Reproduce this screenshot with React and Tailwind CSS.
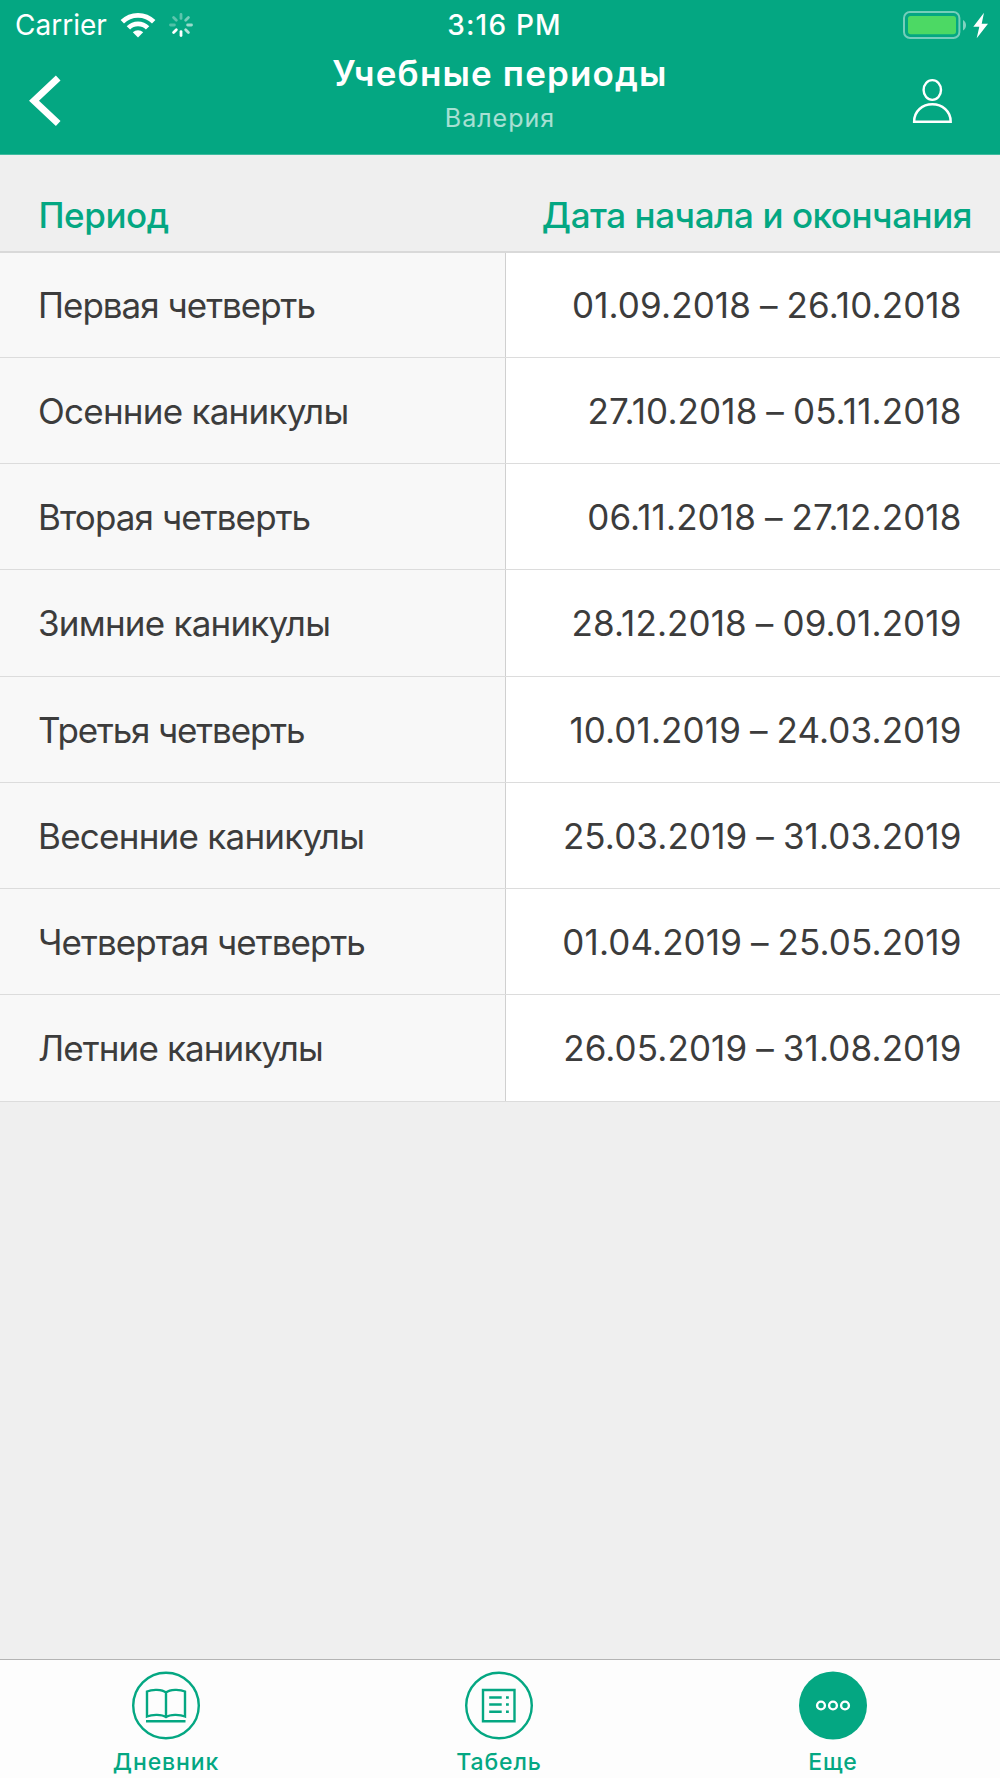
const periods = [
    { name: "Первая четверть", dates: "01.09.2018 – 26.10.2018", spacing: "tracking-[-1px]" },
    { name: "Осенние каникулы", dates: "27.10.2018 – 05.11.2018", spacing: "tracking-[-0.75px]" },
    { name: "Вторая четверть", dates: "06.11.2018 – 27.12.2018", spacing: "tracking-[-0.9px]" },
    { name: "Зимние каникулы", dates: "28.12.2018 – 09.01.2019", spacing: "tracking-[-0.78px]" },
    { name: "Третья четверть", dates: "10.01.2019 – 24.03.2019", spacing: "tracking-[-1.15px]" },
    { name: "Весенние каникулы", dates: "25.03.2019 – 31.03.2019", spacing: "tracking-[-0.75px]" },
    { name: "Четвертая четверть", dates: "01.04.2019 – 25.05.2019", spacing: "tracking-[-0.95px]" },
    { name: "Летние каникулы", dates: "26.05.2019 – 31.08.2019", spacing: "tracking-[-0.88px]" },
];

// opacity of every spoke, clockwise from the top
const spokes = [0.35, 0.45, 0.6, 0.7, 1, 1, 0.3, 0.35];

function Wifi() {
    return (
        <svg width="36" height="26" viewBox="0 0 36 26" fill="none" stroke="white" strokeWidth="4.8">
            <path d="M2.3 9.8a22.2 22.2 0 0 1 31.4 0" />
            <path d="M8.4 15.9a13.6 13.6 0 0 1 19.2 0" />
            <path d="M18 25.5l-5.2-5.2a7.4 7.4 0 0 1 10.4 0z" fill="white" stroke="none" />
        </svg>
    );
}

function Spinner() {
    return (
        <svg width="24" height="24" viewBox="-12 -12 24 24" stroke="white" strokeWidth="2.8" strokeLinecap="round">
            {spokes.map((opacity, i) => (
                <line key={i} x1="0" y1="-6.6" x2="0" y2="-10.5" opacity={opacity} transform={`rotate(${i * 45})`} />
            ))}
        </svg>
    );
}

function Battery() {
    return (
        <svg width="86" height="30" viewBox="0 0 86 30">
            <rect x="1" y="2" width="55.4" height="26" rx="6" fill="none" stroke="white" strokeWidth="2" opacity="0.45" />
            <rect x="5" y="6" width="48" height="18.2" rx="2.6" fill="#4cd964" />
            <path d="M60 10c4 2 4 8.5 0 10.5z" fill="white" opacity="0.5" />
            <path d="M81 2.7L70.3 16.7h6L73.7 28.3 85 13.7h-6.3z" fill="white" />
        </svg>
    );
}

function Header() {
    return (
        <header className="h-[155px] bg-[#04a782] border-b border-[#3fbb9f] text-white">
            <div className="h-[50px] grid grid-cols-3 items-center">
                <div className="flex items-center pl-[15px]">
                    <span className="w-[105px] text-[28px] leading-none">Carrier</span>
                    <Wifi />
                    <span className="ml-[13px]"><Spinner /></span>
                </div>
                <div className="pl-[9px] text-center text-[28px] leading-none font-medium tracking-[1.2px]">3:16 PM</div>
                <div className="flex justify-end pr-[11px]"><Battery /></div>
            </div>
            <div className="h-[104px] flex justify-between">
                <button className="w-[120px] pl-[28px] pt-[24px] flex items-start">
                    <svg width="34" height="54" viewBox="0 0 34 54" fill="none" stroke="white" strokeWidth="6.8">
                        <path d="M30.2 4L6 26.7 30.2 49.4" />
                    </svg>
                </button>
                <div className="text-center">
                    <h1 className="pt-[3px] text-[35px] leading-[40px] font-semibold tracking-[1.15px]">Учебные периоды</h1>
                    <p className="pt-[10px] text-[25px] leading-[30px] tracking-[1px] text-white/65">Валерия</p>
                </div>
                <button className="w-[120px] pl-[32px] pt-[27px] flex items-start">
                    <svg width="42" height="48" viewBox="0 0 42 48" fill="none" stroke="white" strokeWidth="2.4">
                        <ellipse cx="20.3" cy="13" rx="8.7" ry="9.9" />
                        <path d="M2.1 44.7C2.1 34 10.5 27.3 20.3 27.3S38.7 34 38.7 44.7z" />
                    </svg>
                </button>
            </div>
        </header>
    );
}

function Tab({ label, children }) {
    return (
        <a className="flex flex-col items-center pt-[11px]">
            <svg width="68" height="69" viewBox="0 -0.5 68 69" fill="none" stroke="#04a782" strokeWidth="2.4">
                {children}
            </svg>
            <span className="mt-[10px] text-[23px] leading-[25px] font-medium tracking-[0.9px]">{label}</span>
        </a>
    );
}

export default function App() {
    return (
        <div className="w-full h-screen flex flex-col bg-[#efefef] font-[Inter,sans-serif] text-[#3c3c3c]">
            <Header />
            <main className="flex-1 text-[35px] leading-[42px]">
                <div className="h-[98px] pt-[39px] pl-[38.5px] pr-[28px] flex justify-between border-b-2 border-[#d9d9d9] font-medium tracking-[-0.45px] text-[#04a782]">
                    <span>Период</span>
                    <span>Дата начала и окончания</span>
                </div>
                {periods.map((p) => (
                    <div key={p.name} className="h-[106.25px] nth-2:h-[104.75px] flex border-b border-[#dcdcdc] bg-white">
                        <div className={`w-[506px] pl-[38px] pt-px flex items-center bg-[#f8f8f8] border-r border-[#d0d0d0] ${p.spacing}`}>
                            {p.name}
                        </div>
                        <div className="flex-1 pr-[38.5px] pt-px flex items-center justify-end tracking-[0.12px] [word-spacing:-1px]">{p.dates}</div>
                    </div>
                ))}
            </main>
            <nav className="h-[119px] grid grid-cols-[332px_334px_334px] bg-[#fdfdfd] border-t border-[#b4b4b4] text-[#04a782]">
                <Tab label="Дневник">
                    <circle cx="34" cy="34" r="32.8" />
                    <path d="M34 21c-4-3.3-14-3.3-19-1v25c5-2.3 15-2.3 19 .5 4-2.8 14-2.8 19-.5V20c-5-2.3-15-2.3-19 1zM34 21v24" />
                    <path d="M14 49.8h39.5" />
                </Tab>
                <Tab label="Табель">
                    <circle cx="34" cy="34" r="32.8" />
                    <path d="M18 18.5h31.500v31.2H18z" />
                    <path d="M24.2 26h12.5M24.2 33h12.5M24.2 40.2h12.5M41 26h2.8M41 33h2.8M41 40.2h2.8" />
                </Tab>
                <Tab label="Еще">
                    <circle cx="34" cy="34" r="34" fill="#04a782" stroke="none" />
                    <g stroke="white">
                        <circle cx="22" cy="34" r="3.9" />
                        <circle cx="34" cy="34" r="3.9" />
                        <circle cx="46" cy="34" r="3.9" />
                    </g>
                </Tab>
            </nav>
        </div>
    );
}
